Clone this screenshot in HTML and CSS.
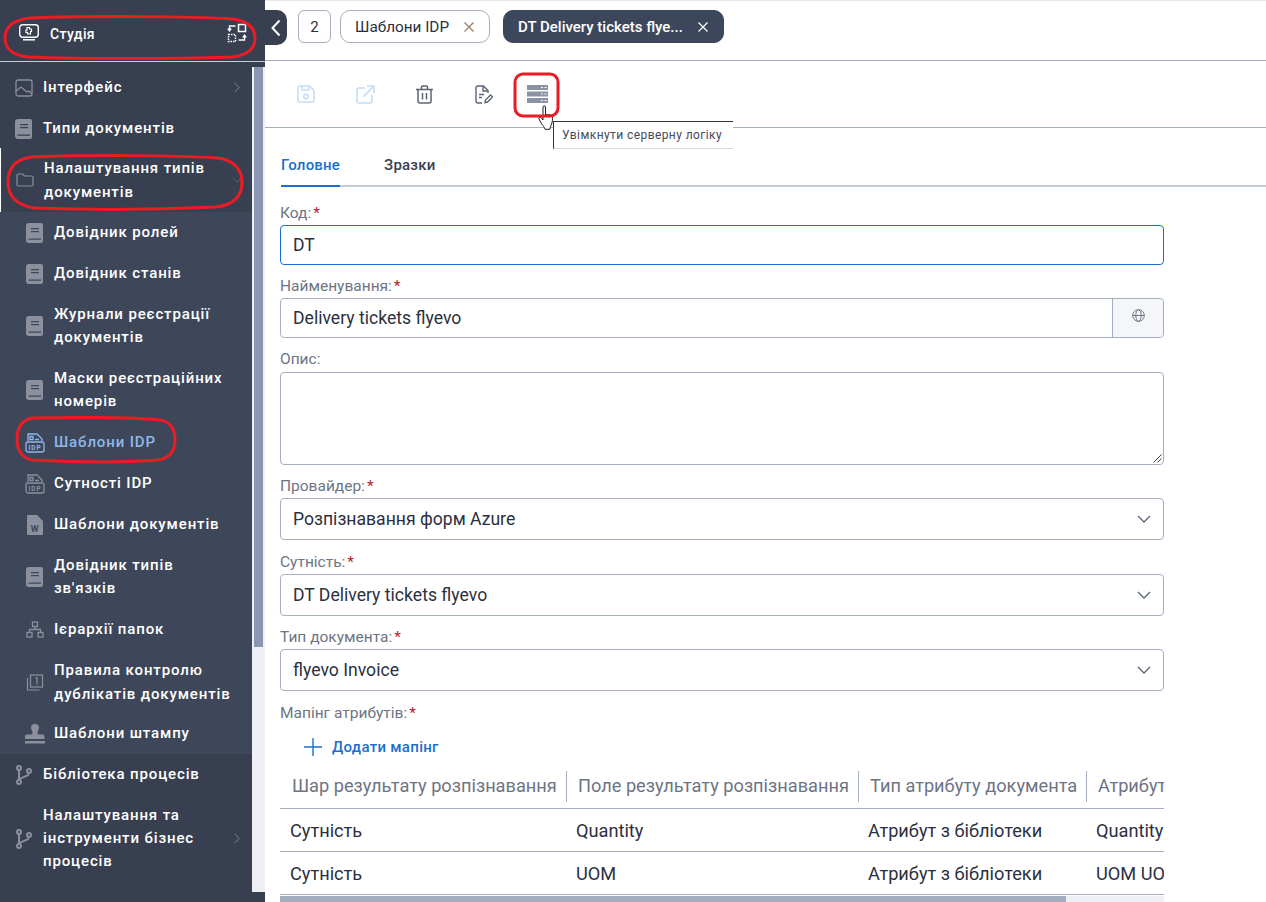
FILE: index.html
```html
<!DOCTYPE html>
<html lang="uk">
<head>
  <meta charset="UTF-8">
  <title>Шаблони IDP</title>
  <link rel="stylesheet" href="styles.css">
</head>
<body>

  <svg class="defs" width="0" height="0">
    <symbol id="book" viewBox="0 0 18 20">
      <path fill="currentColor" fill-rule="evenodd" d="M3 0h12a2 2 0 0 1 2 2v16a2 2 0 0 1-2 2H3a3 3 0 0 1-3-3V3a3 3 0 0 1 3-3zM5 5v1.200h8V5zM5 8v1.200h8V8zM2.500 15.500v1.300h12.500v-1.300z"/>
    </symbol>
    <symbol id="branch" viewBox="0 0 18 20">
      <g fill="none" stroke="currentColor" stroke-width="2">
        <circle cx="4" cy="3" r="2"/><circle cx="4" cy="17" r="2"/><circle cx="14" cy="6" r="2"/>
        <path d="M4 5v10M14 8c0 4-7 3-10 7"/>
      </g>
    </symbol>
    <symbol id="idp" viewBox="0 0 20 20">
      <g fill="none" stroke="currentColor" stroke-width="1.300">
        <path d="M3 8V1h9l5 5v2"/><path d="M5 3.500h3v3H5zM10 6.500h4"/>
        <rect x="1" y="9" width="18" height="10" rx="2"/>
      </g>
      <text x="10" y="17" text-anchor="middle" class="idp-text" fill="currentColor">IDP</text>
    </symbol>
    <symbol id="chevron-down" viewBox="0 0 14 8">
      <path d="M1 1l6 6 6-6" fill="none" stroke="currentColor" stroke-width="1.300"/>
    </symbol>
    <symbol id="chevron-right" viewBox="0 0 8 14">
      <path d="M1 1l6 6-6 6" fill="none" stroke="currentColor" stroke-width="1.300"/>
    </symbol>
    <symbol id="close" viewBox="0 0 10 10">
      <path d="M0.500 0.500l9 9M9.500 0.500l-9 9" fill="none" stroke="currentColor" stroke-width="1.200"/>
    </symbol>
  </svg>

  <div class="app">
    <aside class="sidebar">
      <div class="studio">
        <svg class="studio-icon" width="20" height="17" viewBox="0 0 20 17">
          <rect x="0.700" y="0.700" width="18.600" height="12.600" rx="3" fill="none" stroke="#fff" stroke-width="1.400"/>
          <path d="M4 15.800h12" stroke="#fff" stroke-width="1.500"/>
          <path d="M8 3.500h2.500V5H12.500v2.500h-1V10H8.500V8.500H7V6h1z" fill="none" stroke="#fff" stroke-width="1.200"/>
        </svg>
        <span class="studio-name">Студія</span>
        <svg class="studio-switch" width="20" height="20" viewBox="0 0 20 20">
          <rect x="11.500" y="1.500" width="7" height="7" fill="none" stroke="#fff" stroke-width="1.500"/>
          <rect x="1.500" y="11.500" width="7" height="7" fill="none" stroke="#fff" stroke-width="1.500" stroke-dasharray="1.500 1"/>
          <path d="M8.500 3H2.500v4M.8 5.500L2.500 7.800 4.200 5.500M11.500 17h6v-4M15.800 14.500l1.700-2.300 1.700 2.300" fill="none" stroke="#fff" stroke-width="1.300"/>
        </svg>
      </div>
      <div class="sidebar-line"></div>

      <div class="nav-wrap">
        <nav class="nav">
          <a class="item">
            <svg class="ico" width="18" height="18" viewBox="0 0 18 18"><rect x="1" y="1" width="16" height="16" rx="2" fill="none" stroke="currentColor" stroke-width="1.300"/><path d="M1 12l5-4 6 5 2-1 3 3" fill="none" stroke="currentColor" stroke-width="1.300"/></svg>
            <span class="item-text">Інтерфейс</span>
            <svg class="arrow" width="6" height="11"><use href="#chevron-right"/></svg>
          </a>
          <a class="item">
            <svg class="ico" width="18" height="20"><use href="#book"/></svg>
            <span class="item-text">Типи документів</span>
          </a>
          <a class="item item-open">
            <svg class="ico" width="18" height="14" viewBox="0 0 18 14"><path d="M1 2.500a1.500 1.500 0 0 1 1.500-1.500h4l2 2h7A1.500 1.500 0 0 1 17 4.500v7a1.500 1.500 0 0 1-1.500 1.500h-13A1.500 1.500 0 0 1 1 11.500z" fill="none" stroke="currentColor" stroke-width="1.200"/></svg>
            <span class="item-text">Налаштування типів документів</span>
            <svg class="arrow arrow-dim" width="10" height="6"><use href="#chevron-down"/></svg>
          </a>

          <div class="subnav">
            <a class="item"><svg class="ico" width="18" height="20"><use href="#book"/></svg><span class="item-text">Довідник ролей</span></a>
            <a class="item"><svg class="ico" width="18" height="20"><use href="#book"/></svg><span class="item-text">Довідник станів</span></a>
            <a class="item"><svg class="ico" width="18" height="20"><use href="#book"/></svg><span class="item-text">Журнали реєстрації документів</span></a>
            <a class="item"><svg class="ico" width="18" height="20"><use href="#book"/></svg><span class="item-text">Маски реєстраційних номерів</span></a>
            <a class="item item-active"><svg class="ico" width="20" height="20"><use href="#idp"/></svg><span class="item-text">Шаблони IDP</span></a>
            <a class="item"><svg class="ico" width="20" height="20"><use href="#idp"/></svg><span class="item-text">Сутності IDP</span></a>
            <a class="item">
              <svg class="ico" width="16" height="20" viewBox="0 0 16 20"><path fill="currentColor" d="M1 0h9l6 6v13a1 1 0 0 1-1 1H1a1 1 0 0 1-1-1V1a1 1 0 0 1 1-1z"/><text x="8" y="17" text-anchor="middle" class="word-text">W</text></svg>
              <span class="item-text">Шаблони документів</span>
            </a>
            <a class="item"><svg class="ico" width="18" height="20"><use href="#book"/></svg><span class="item-text">Довідник типів зв'язків</span></a>
            <a class="item">
              <svg class="ico" width="18" height="17" viewBox="0 0 18 17"><g fill="none" stroke="currentColor" stroke-width="1.300"><rect x="6.500" y="1" width="5" height="4.500"/><rect x="1" y="11.500" width="5" height="4.500"/><rect x="12" y="11.500" width="5" height="4.500"/><path d="M9 5.500v3M3.500 11.500v-3h11v3"/></g></svg>
              <span class="item-text">Ієрархії папок</span>
            </a>
            <a class="item item-dup">
              <svg class="ico" width="17" height="17" viewBox="0 0 17 17"><g fill="none" stroke="currentColor" stroke-width="1.200"><rect x="4" y="1" width="12" height="12"/><path d="M1 4v12h12"/><path d="M9 4.500l1.500-1v7"/></g></svg>
              <span class="item-text">Правила контролю дублікатів документів</span>
            </a>
            <a class="item">
              <svg class="ico" width="20" height="20" viewBox="0 0 20 20"><path fill="currentColor" d="M10 0c2.500 0 4 1.700 4 3.800 0 2-1.500 3-1.500 5 0 1 .5 1.700 1.500 1.700h3.500c1 0 2 .8 2 2V15H0v-2.500c0-1.200 1-2 2-2h4c1 0 1.500-.7 1.500-1.700 0-2-1.500-3-1.500-5C6 1.700 7.500 0 10 0zM0 17h20v2.500H0z"/></svg>
              <span class="item-text">Шаблони штампу</span>
            </a>
          </div>

          <a class="item">
            <svg class="ico" width="18" height="20"><use href="#branch"/></svg>
            <span class="item-text">Бібліотека процесів</span>
          </a>
          <a class="item">
            <svg class="ico" width="18" height="20"><use href="#branch"/></svg>
            <span class="item-text">Налаштування та інструменти бізнес процесів</span>
            <svg class="arrow" width="6" height="11"><use href="#chevron-right"/></svg>
          </a>
        </nav>
        <div class="side-scroll"><div class="side-thumb"></div></div>
      </div>
    </aside>

    <main class="main">
      <div class="tabs">
        <button class="collapse">
          <svg width="10" height="18" viewBox="0 0 10 18"><path d="M8.500 1.500L1.500 9l7 7.500" fill="none" stroke="#fff" stroke-width="2"/></svg>
        </button>
        <div class="tab tab-count">2</div>
        <div class="tab tab-plain">Шаблони IDP <svg class="tab-x tab-x-orange" width="10" height="10"><use href="#close"/></svg></div>
        <div class="tab tab-current">DT Delivery tickets flye... <svg class="tab-x" width="10" height="10"><use href="#close"/></svg></div>
      </div>

      <div class="toolbar">
        <button class="tool tool-off">
          <svg width="18" height="18" viewBox="0 0 18 18"><g fill="none" stroke="currentColor" stroke-width="1.500"><path d="M2.500 1h10L17 5.500V15a2 2 0 0 1-2 2H3a2 2 0 0 1-2-2V3a2 2 0 0 1 1.500-2z"/><path d="M5 1v4h7V1"/><circle cx="9" cy="11.500" r="2.200"/></g></svg>
        </button>
        <button class="tool tool-off">
          <svg width="19" height="19" viewBox="0 0 19 19"><g fill="none" stroke="currentColor" stroke-width="1.600"><path d="M9 3H3a2 2 0 0 0-2 2v11a2 2 0 0 0 2 2h11a2 2 0 0 0 2-2v-6"/><path d="M7 12L18 1M11 1h7v7"/></g></svg>
        </button>
        <button class="tool">
          <svg width="17" height="19" viewBox="0 0 17 19"><g fill="none" stroke="currentColor" stroke-width="1.500"><path d="M0 4.500h17M5.500 4V2a1 1 0 0 1 1-1h4a1 1 0 0 1 1 1v2"/><path d="M2 4.500V16a2 2 0 0 0 2 2h9a2 2 0 0 0 2-2V4.500"/><path d="M6.500 8v6.500M10.500 8v6.500"/></g></svg>
        </button>
        <button class="tool tool-doc">
          <svg width="18" height="19" viewBox="0 0 18 19"><g fill="none" stroke="currentColor" stroke-width="1.400"><path d="M7 18H3a2 2 0 0 1-2-2V3a2 2 0 0 1 2-2h5.500L13 5.500V8"/><path d="M8 1.500V6h4.500"/><path d="M4 9.500h5M4 12.500h3"/><path d="M10 17.500l.5-2.500 5-5 2 2-5 5z"/></g></svg>
        </button>
        <button class="tool tool-server">
          <svg width="21" height="18" viewBox="0 0 21 18"><path fill="#8a92a4" fill-rule="evenodd" d="M0 0h21v5H0zM14 2v1h2V2zM17.500 2v1h2V2zM0 6.500h21v5H0zM14 8.500v1h2v-1zM17.500 8.500v1h2v-1zM0 13h21v5H0zM14 15v1h2v-1zM17.500 15v1h2v-1z"/></svg>
        </button>
      </div>

      <div class="content-tabs">
        <a class="ctab ctab-active">Головне</a>
        <a class="ctab">Зразки</a>
      </div>

      <form class="form">
        <label class="label">Код:<span class="req">*</span></label>
        <div class="input input-focus">DT</div>

        <label class="label">Найменування:<span class="req">*</span></label>
        <div class="input input-group">
          <span class="input-val">Delivery tickets flyevo</span>
          <span class="addon">
            <svg width="13" height="13" viewBox="0 0 13 13"><g fill="none" stroke="#6e7688" stroke-width="1"><circle cx="6.500" cy="6.500" r="5.800"/><ellipse cx="6.500" cy="6.500" rx="2.700" ry="5.800"/><path d="M.7 6.500h11.600"/></g></svg>
          </span>
        </div>

        <label class="label label-opis">Опис:</label>
        <div class="textarea">
          <svg class="grip" width="9" height="9" viewBox="0 0 9 9"><path d="M8.500.5l-8 8M8.500 4.500l-4 4" stroke="#444" stroke-width="1"/></svg>
        </div>

        <label class="label">Провайдер:<span class="req">*</span></label>
        <div class="input select">Розпізнавання форм Azure <svg class="sel-arrow" width="14" height="8"><use href="#chevron-down"/></svg></div>

        <label class="label">Сутність:<span class="req">*</span></label>
        <div class="input select">DT Delivery tickets flyevo <svg class="sel-arrow" width="14" height="8"><use href="#chevron-down"/></svg></div>

        <label class="label">Тип документа:<span class="req">*</span></label>
        <div class="input select">flyevo Invoice <svg class="sel-arrow" width="14" height="8"><use href="#chevron-down"/></svg></div>

        <label class="label">Мапінг атрибутів:<span class="req">*</span></label>
        <a class="add-link">
          <svg width="18" height="18" viewBox="0 0 18 18"><path d="M9 0v18M0 9h18" stroke="#1a6fd0" stroke-width="1.400"/></svg>
          Додати мапінг
        </a>

        <div class="grid-wrap">
          <div class="grid grid-head">
            <div class="hcell">Шар результату розпізнавання</div>
            <div class="hcell">Поле результату розпізнавання</div>
            <div class="hcell">Тип атрибуту документа</div>
            <div class="hcell">Атрибут документа</div>
          </div>
          <div class="grid grid-row">
            <div class="cell">Сутність</div>
            <div class="cell">Quantity</div>
            <div class="cell">Атрибут з бібліотеки</div>
            <div class="cell">Quantity</div>
          </div>
          <div class="grid grid-row">
            <div class="cell">Сутність</div>
            <div class="cell">UOM</div>
            <div class="cell">Атрибут з бібліотеки</div>
            <div class="cell">UOM UOM</div>
          </div>
          <div class="hscroll"><div class="hthumb"></div></div>
        </div>
      </form>
    </main>
  </div>

  <div class="tooltip">Увімкнути серверну логіку</div>

  <svg class="cursor" width="20" height="26" viewBox="0 0 20 26">
    <path d="M5 2c0-1.500 2.500-1.500 2.500 0v8c.5-1 2-1 2.500 0 .5-.8 2-.8 2.500.3.700-.6 2-.3 2 1 .2 3 0 6-1.500 9-.8 1.800-1 3-1 4H7c-.5-2-2-3.500-3.500-5.500L1 14c-.8-1.500 1-2.500 2-1.500L5 15z" fill="#fff" stroke="#222" stroke-width="1"/>
  </svg>

  <!-- red marks drawn over the screenshot -->
  <svg class="marks" width="1266" height="902" viewBox="0 0 1266 902">
    <g fill="none" stroke="#ed1c24" stroke-width="3">
      <path d="M30 18C90 16 190 16 232 19C248 21 255 28 255 38C255 49 248 55 232 57C170 59 80 59 28 57C12 55 5 49 5 38C5 27 12 20 30 18Z"/>
      <path d="M32 157C90 155 170 155 218 158C234 160 242 170 242 182C242 196 234 205 216 207C150 210 90 210 34 208C16 205 8 196 8 182C8 168 16 159 32 157Z"/>
      <path d="M32 418C70 417 130 417 160 420C171 422 175 430 175 440C175 451 170 458 158 460C120 463 70 462 32 460C22 458 17 450 17 440C17 428 22 420 32 418Z"/>
      <rect x="515" y="74" width="43" height="42" rx="8"/>
    </g>
  </svg>

</body>
</html>
```

FILE: styles.css
```css
html, body {
  margin: 0;
  height: 902px;
  overflow: hidden;
}

body {
  position: relative;
  font-family: Roboto, "Noto Sans", sans-serif;
  color: #2b3040;
  background: #fff;
}

.defs {
  position: absolute;
}

.app {
  display: flex;
  height: 902px;
}

/* sidebar */
.sidebar {
  width: 265px;
  flex: none;
  background: #383f51;
  color: #fff;
  display: flex;
  flex-direction: column;
}

.studio {
  height: 61px;
  flex: none;
  display: flex;
  align-items: center;
  padding: 6px 18px 0 19px;
  box-sizing: border-box;
}

.studio-icon {
  margin-top: -3px;
}

.studio-switch {
  margin-top: -2px;
}

.studio-name {
  margin-left: 11px;
  font-size: 14px;
  font-weight: 500;
  letter-spacing: 0.4px;
  flex: 1;
}

.sidebar-line {
  height: 1px;
  background: #c8ccd6;
  flex: none;
}

.nav-wrap {
  flex: none;
  height: 825px;
  display: flex;
  margin-top: 5px;
}

.nav {
  width: 252px;
  flex: none;
}

.item {
  display: flex;
  align-items: center;
  padding: 9px 12px 9px 15px;
  color: #fff;
  font-size: 15px;
  font-weight: 500;
  line-height: 23px;
  letter-spacing: 0.87px;
}

.item-open {
  margin-top: -1px;
  padding: 8px 10px 8px 15px;
  border-left: 1px solid #fff;
  line-height: 24px;
}

.ico {
  flex: none;
  color: #8b909c;
}

.item-text {
  flex: 1;
  margin-left: 10px;
}

.arrow {
  flex: none;
  color: #7d8494;
  margin-left: 6px;
}

.arrow-dim {
  color: #5c6375;
}

.subnav {
  background: #3e475a;
}

.subnav .item {
  padding-left: 25px;
  padding-right: 20px;
}

.subnav .item-dup {
  padding-top: 8px;
  padding-bottom: 7px;
  line-height: 24px;
}

.subnav .ico {
  width: 20px;
}

.subnav .item-text {
  margin-left: 9px;
}

.item-active,
.item-active .ico {
  color: #8fb8ea;
}

.idp-text {
  font-size: 6.5px;
  font-weight: 700;
}

.word-text {
  font-size: 9px;
  font-weight: 700;
  fill: #3e475a;
}

.side-scroll {
  width: 13px;
  flex: none;
  background: #eef0f5;
  padding: 0 2px;
  box-sizing: border-box;
}

.side-thumb {
  height: 580px;
  background: #8a96b2;
}

/* top tabs */
.main {
  flex: 1;
  min-width: 0;
}

.tabs {
  height: 61px;
  box-sizing: border-box;
  border-top: 1px solid #e6e8ec;
  border-bottom: 1px solid #a5aec0;
  display: flex;
  align-items: flex-start;
  padding-top: 9px;
}

.collapse {
  width: 22px;
  height: 35px;
  border: none;
  padding: 0;
  background: #383f51;
  border-radius: 0 10px 10px 0;
  display: flex;
  align-items: center;
  justify-content: center;
  margin-right: 11px;
}

.tab {
  height: 33px;
  box-sizing: border-box;
  border: 1px solid #a5aec0;
  border-radius: 10px;
  display: flex;
  align-items: center;
  font-size: 15px;
  padding: 0 15px 0 14px;
  margin-right: 9px;
  white-space: nowrap;
}

.tab-plain {
  font-size: 15.3px;
}

.tab-count {
  width: 33px;
  justify-content: center;
  padding: 0;
  border-radius: 6px;
}

.tab-x {
  margin-left: 15px;
  color: #fff;
}

.tab-x-orange {
  color: #9a7a66;
}

.tab-current {
  background: #3d475c;
  border-color: #3d475c;
  color: #fff;
  font-weight: 500;
  margin-left: 4px;
}

/* toolbar */
.toolbar {
  height: 67px;
  box-sizing: border-box;
  border-bottom: 1px solid #a5aec0;
  display: flex;
  align-items: center;
  padding-left: 21px;
  gap: 19px;
}

.tool {
  width: 40px;
  height: 40px;
  border: none;
  background: none;
  padding: 0;
  display: flex;
  align-items: center;
  justify-content: center;
  color: #5b6375;
}

.tool-off {
  color: #c4dcf7;
}

.tool-doc svg {
  margin-left: 2px;
}

.tool-server {
  margin-left: -5px;
}

.content-tabs {
  height: 59px;
  box-sizing: border-box;
  margin-left: 16px;
  border-bottom: 2px solid #c5cbd8;
  display: flex;
  align-items: flex-end;
  gap: 44px;
}

.ctab {
  font-size: 15px;
  font-weight: 500;
  letter-spacing: 0.2px;
  line-height: 40px;
  margin-bottom: -2px;
  border-bottom: 2px solid transparent;
  color: #3a4050;
}

.ctab-active {
  color: #1a6fd0;
  border-bottom-color: #1a6fd0;
}

/* form */
.form {
  width: 884px;
  margin-left: 15px;
  padding-top: 14px;
}

.label {
  display: block;
  font-size: 15.5px;
  line-height: 20px;
  color: #6d7484;
  padding-top: 2px;
  margin-bottom: 2px;
}

.label-opis {
  margin-bottom: 3px;
}

.req {
  color: #b3232f;
  margin-left: 2px;
}

.input {
  height: 40px;
  box-sizing: border-box;
  border: 1px solid #a5aec0;
  border-radius: 4px;
  font-size: 17.6px;
  padding: 0 12px;
  display: flex;
  align-items: center;
  margin-bottom: 9px;
}

.input-focus {
  border-color: #1a6fd0;
}

.input-group {
  padding-right: 0;
  justify-content: space-between;
}

.addon {
  width: 51px;
  height: 38px;
  background: #f4f6fa;
  border-left: 1px solid #a5aec0;
  border-radius: 0 4px 4px 0;
  display: flex;
  align-items: center;
  justify-content: center;
  padding-bottom: 6px;
  box-sizing: border-box;
}

.textarea {
  height: 93px;
  box-sizing: border-box;
  border: 1px solid #a5aec0;
  border-radius: 4px;
  margin-bottom: 9px;
  display: flex;
  align-items: flex-end;
  justify-content: flex-end;
  padding: 0 1px 1px 0;
}

.select {
  height: 42px;
  justify-content: space-between;
  padding-right: 12px;
  margin-bottom: 9.5px;
}

.sel-arrow {
  color: #5b6375;
}

.add-link {
  display: flex;
  align-items: center;
  gap: 10px;
  margin: 8.5px 0 0 24px;
  height: 32px;
  font-size: 15px;
  font-weight: 500;
  letter-spacing: 0.3px;
  color: #1a6fd0;
}

.grid-wrap {
  overflow: hidden;
  margin-top: 8px;
}

.grid {
  display: grid;
  grid-template-columns: 287px 292px 228px 300px;
  width: 1107px;
  border-bottom: 1px solid #a5aec0;
}

.grid-head {
  height: 38px;
  box-sizing: border-box;
  padding-bottom: 6px;
}

.hcell {
  font-size: 18.2px;
  color: #6d7484;
  line-height: 30px;
  padding-left: 12px;
  border-right: 1px solid #a5aec0;
  white-space: nowrap;
}

.hcell + .hcell {
  padding-left: 11px;
}

.hcell:last-child {
  border-right: none;
}

.grid-row {
  height: 43px;
  box-sizing: border-box;
  align-items: center;
}

.cell {
  font-size: 18.2px;
  padding-left: 10px;
  white-space: nowrap;
}

.cell + .cell {
  padding-left: 9px;
}

.hscroll {
  height: 9px;
  margin-top: 1px;
  background: #eef0f5;
}

.hthumb {
  width: 786px;
  height: 9px;
  background: #a3adc0;
}

/* things lying over the page */
.tooltip {
  position: absolute;
  left: 553px;
  top: 121px;
  width: 180px;
  height: 28px;
  box-sizing: border-box;
  background: #fff;
  border-top: 1px solid #333;
  border-left: 1px solid #333;
  border-bottom: 1px solid #d5d8df;
  font-size: 12px;
  line-height: 27px;
  letter-spacing: 0.42px;
  padding-left: 8px;
  color: #444a58;
  white-space: nowrap;
}

.cursor {
  position: absolute;
  left: 538px;
  top: 105px;
}

.marks {
  position: absolute;
  left: 0;
  top: 0;
  pointer-events: none;
}
```
